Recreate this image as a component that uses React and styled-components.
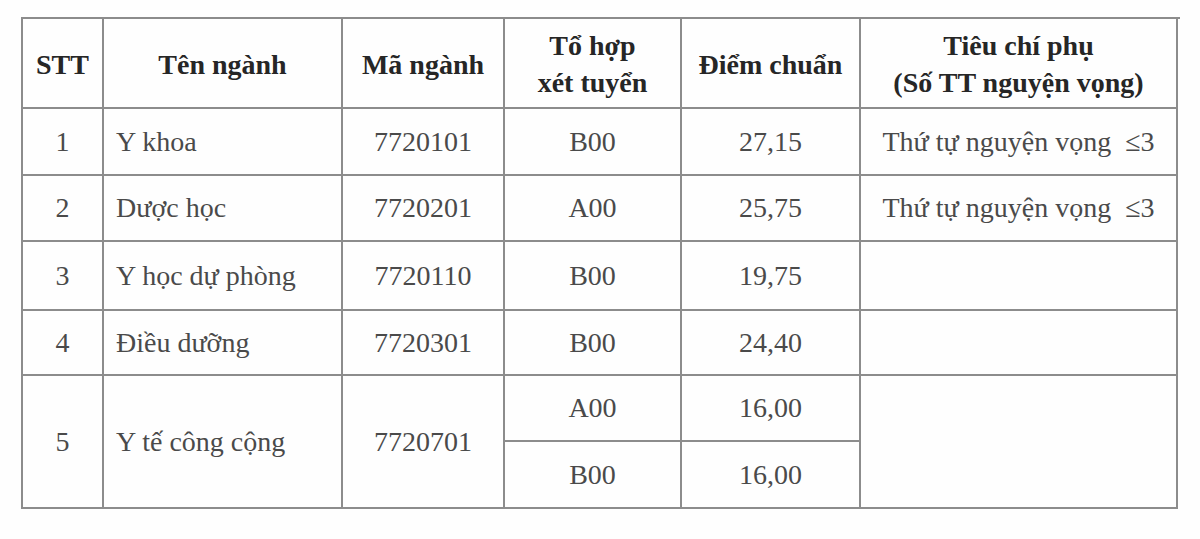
import React from "react";
import styled, { createGlobalStyle } from "styled-components";

const Global = createGlobalStyle`
  html, body { margin: 0; padding: 0; background: #ffffff; }
  body { font-family: "Liberation Serif", "Times New Roman", serif; }
`;

const Page = styled.div`
  width: 1200px;
  height: 539px;
  padding: 17px 0 0 21px;
  box-sizing: border-box;
  background: #fefefe;
`;

const Table = styled.div`
  display: grid;
  grid-template-columns: 81px 239px 162px 177px 179px 317px;
  grid-template-rows: 90px 67px 66px 69px 65px 66px 67px;
  width: 1157px;
  border-top: 2px solid #8c8c8c;
  border-left: 2px solid #8c8c8c;
  box-sizing: content-box;
`;

const Cell = styled.div`
  box-sizing: border-box;
  border-right: 2px solid #8c8c8c;
  border-bottom: 2px solid #8c8c8c;
  display: flex;
  align-items: center;
  justify-content: ${(p) => (p.$left ? "flex-start" : "center")};
  padding-left: ${(p) => (p.$left ? "12px" : "0")};
  grid-row: ${(p) => p.$row || "auto"};
  grid-column: ${(p) => p.$col || "auto"};
  font-size: 28px;
  color: #4a4a4a;
  white-space: nowrap;
`;

const HeadCell = styled(Cell)`
  font-weight: bold;
  font-size: 28px;
  color: #262626;
  text-align: center;
  line-height: 37px;
  padding-top: 2px;
`;

const rows = [
  { stt: "1", name: "Y khoa", code: "7720101", combo: "B00", score: "27,15", note: "Thứ tự nguyện vọng\u00a0 ≤3" },
  { stt: "2", name: "Dược học", code: "7720201", combo: "A00", score: "25,75", note: "Thứ tự nguyện vọng\u00a0 ≤3" },
  { stt: "3", name: "Y học dự phòng", code: "7720110", combo: "B00", score: "19,75", note: "" },
  { stt: "4", name: "Điều dưỡng", code: "7720301", combo: "B00", score: "24,40", note: "" },
];

export default function App() {
  return (
    <>
      <Global />
      <Page>
        <Table>
          <HeadCell>STT</HeadCell>
          <HeadCell>Tên ngành</HeadCell>
          <HeadCell>Mã ngành</HeadCell>
          <HeadCell>
            Tổ hợp
            <br />
            xét tuyển
          </HeadCell>
          <HeadCell>Điểm chuẩn</HeadCell>
          <HeadCell>
            Tiêu chí phụ
            <br />
            (Số TT nguyện vọng)
          </HeadCell>

          {rows.map((r) => (
            <React.Fragment key={r.stt}>
              <Cell>{r.stt}</Cell>
              <Cell $left>{r.name}</Cell>
              <Cell>{r.code}</Cell>
              <Cell>{r.combo}</Cell>
              <Cell>{r.score}</Cell>
              <Cell>{r.note}</Cell>
            </React.Fragment>
          ))}

          <Cell $row="6 / span 2" $col="1">5</Cell>
          <Cell $row="6 / span 2" $col="2" $left>Y tế công cộng</Cell>
          <Cell $row="6 / span 2" $col="3">7720701</Cell>
          <Cell $row="6" $col="4">A00</Cell>
          <Cell $row="6" $col="5">16,00</Cell>
          <Cell $row="6 / span 2" $col="6" />
          <Cell $row="7" $col="4">B00</Cell>
          <Cell $row="7" $col="5">16,00</Cell>
        </Table>
      </Page>
    </>
  );
}
